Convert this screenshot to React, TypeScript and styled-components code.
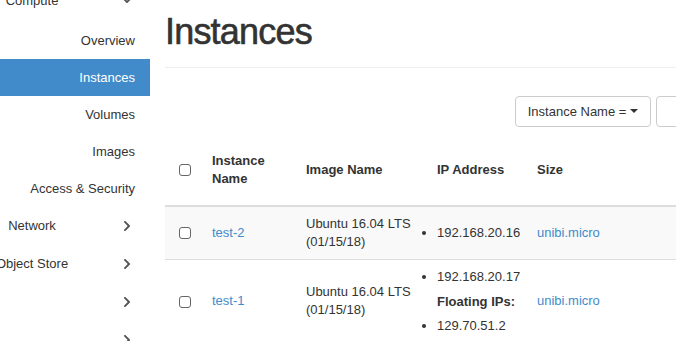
import styled, { createGlobalStyle } from "styled-components";
import { FaChevronDown, FaChevronRight } from "react-icons/fa";

interface Instance {
  id: string;
  name: string;
  image: string;
  ips: string[];
  floatingIps: string[];
  size: string;
}

const instances: Instance[] = [
  {
    id: "2",
    name: "test-2",
    image: "Ubuntu 16.04 LTS (01/15/18)",
    ips: ["192.168.20.16"],
    floatingIps: [],
    size: "unibi.micro",
  },
  {
    id: "1",
    name: "test-1",
    image: "Ubuntu 16.04 LTS (01/15/18)",
    ips: ["192.168.20.17"],
    floatingIps: ["129.70.51.2"],
    size: "unibi.micro",
  },
];

const GlobalStyle = createGlobalStyle`
  html, body {
    margin: 0;
    overflow: hidden;
    background: #fff;
    font-family: "Liberation Sans", Arial, sans-serif;
    font-size: 13px;
    color: #333;
  }
`;

const Layout = styled.div`
  display: flex;
  width: 960px;
  height: 341px;
  overflow: hidden;
`;

const Sidebar = styled.nav`
  width: 150px;
  flex-shrink: 0;
  margin-top: -19px;
`;

const GroupHeader = styled.div`
  display: flex;
  align-items: center;
  height: 38px;
  padding-right: 17px;
  color: #333;

  svg {
    color: #555;
  }
`;

const GroupLabel = styled.span`
  width: 64px;
  display: flex;
  justify-content: center;
  white-space: nowrap;
`;

const Spacer = styled.span`
  flex: 1;
`;

const SubMenu = styled.div`
  padding-top: 2.5px;
`;

const SubItem = styled.a<{ $active?: boolean }>`
  display: block;
  height: 37px;
  line-height: 37px;
  text-align: right;
  padding-right: 15px;
  text-decoration: none;
  color: ${(p) => (p.$active ? "#fff" : "#333")};
  background: ${(p) => (p.$active ? "#428bca" : "transparent")};
`;

const Main = styled.main`
  flex: 1;
  min-width: 0;
  padding: 0 15px;
`;

const PageHeader = styled.div`
  margin-top: 12px;
  padding-bottom: 15px;
  border-bottom: 1px solid #eee;
`;

const Title = styled.h1`
  margin: 0;
  font-size: 36px;
  line-height: 1.1;
  font-weight: 500;
  letter-spacing: -0.8px;
  color: #333;
  -webkit-text-stroke: 0.6px #333;
`;

const Toolbar = styled.div`
  display: flex;
  justify-content: flex-end;
  gap: 5px;
  margin-top: 28px;
`;

const DropButton = styled.button`
  height: 31px;
  padding: 0 12px;
  border: 1px solid #ccc;
  border-radius: 4px;
  background: #fff;
  color: #333;
  font: inherit;
  display: inline-flex;
  align-items: center;
  white-space: pre;
`;

const Caret = styled.span`
  width: 0;
  height: 0;
  border-left: 4px solid transparent;
  border-right: 4px solid transparent;
  border-top: 4px solid #333;
`;

const FilterInput = styled.input`
  width: 200px;
  height: 31px;
  box-sizing: border-box;
  border: 1px solid #ccc;
  border-radius: 4px;
  padding: 0 10px;
  font: inherit;
`;

const FilterButton = styled.button`
  width: 84px;
  height: 31px;
  border: 1px solid #ccc;
  border-radius: 4px;
  background: #fff;
  font: inherit;
  color: #333;
`;

const Table = styled.table`
  width: 100%;
  margin-top: 17px;
  table-layout: fixed;
  border-collapse: collapse;
`;

const HeadCell = styled.th<{ $center?: boolean }>`
  padding: 8px 8px 17px;
  text-align: ${(p) => (p.$center ? "center" : "left")};
  vertical-align: middle;
  line-height: 18px;
  font-weight: bold;
  border-bottom: 2px solid #ddd;
`;

const Row = styled.tr<{ $striped?: boolean }>`
  background: ${(p) => (p.$striped ? "#f9f9f9" : "#fff")};
`;

const Cell = styled.td<{ $center?: boolean }>`
  padding: 8px;
  line-height: 18px;
  vertical-align: middle;
  text-align: ${(p) => (p.$center ? "center" : "left")};
  border-top: 1px solid #ddd;
`;

const CheckBox = styled.input.attrs({ type: "checkbox" })`
  appearance: none;
  display: inline-block;
  width: 12px;
  height: 12px;
  margin: 0;
  border: 1px solid #666;
  border-radius: 3px;
  background: #fff;
  vertical-align: middle;
`;

const Link = styled.a`
  color: #428bca;
  text-decoration: none;
`;

const IpList = styled.ul`
  margin: 0;
  padding-left: 0;
  list-style: disc outside;
`;

const FloatingLabel = styled.strong`
  display: block;
  margin: 7px 0 6px;
`;

export default function App() {
  return (
    <>
      <GlobalStyle />
      <Layout>
        <Sidebar>
          <GroupHeader>
            <GroupLabel>Compute</GroupLabel>
            <Spacer />
            <FaChevronDown size={12} />
          </GroupHeader>
          <SubMenu>
            <SubItem>Overview</SubItem>
            <SubItem $active>Instances</SubItem>
            <SubItem>Volumes</SubItem>
            <SubItem>Images</SubItem>
            <SubItem>Access &amp; Security</SubItem>
          </SubMenu>
          {["Network", "Object Store", "", ""].map((label, i) => (
            <GroupHeader key={i}>
              <GroupLabel>{label}</GroupLabel>
              <Spacer />
              <FaChevronRight size={12} />
            </GroupHeader>
          ))}
        </Sidebar>
        <Main>
          <PageHeader>
            <Title>Instances</Title>
          </PageHeader>
          <Toolbar>
            <DropButton>
              {"Instance Name = "}
              <Caret />
            </DropButton>
            <FilterInput />
            <FilterButton>Filter</FilterButton>
          </Toolbar>
          <Table>
            <colgroup>
              <col style={{ width: 39 }} />
              <col style={{ width: 94 }} />
              <col style={{ width: 131 }} />
              <col style={{ width: 100 }} />
              <col style={{ width: 160 }} />
              <col />
            </colgroup>
            <thead>
              <tr>
                <HeadCell $center>
                  <CheckBox readOnly />
                </HeadCell>
                <HeadCell>Instance Name</HeadCell>
                <HeadCell>Image Name</HeadCell>
                <HeadCell>IP Address</HeadCell>
                <HeadCell>Size</HeadCell>
                <HeadCell>Key Pair</HeadCell>
              </tr>
            </thead>
            <tbody>
              {instances.map((inst, i) => (
                <Row key={inst.id} $striped={i % 2 === 0}>
                  <Cell $center>
                    <CheckBox readOnly />
                  </Cell>
                  <Cell>
                    <Link>{inst.name}</Link>
                  </Cell>
                  <Cell>{inst.image}</Cell>
                  <Cell>
                    <IpList>
                      {inst.ips.map((ip) => (
                        <li key={ip}>{ip}</li>
                      ))}
                    </IpList>
                    {inst.floatingIps.length > 0 && (
                      <>
                        <FloatingLabel>Floating IPs:</FloatingLabel>
                        <IpList>
                          {inst.floatingIps.map((ip) => (
                            <li key={ip}>{ip}</li>
                          ))}
                        </IpList>
                      </>
                    )}
                  </Cell>
                  <Cell>
                    <Link>{inst.size}</Link>
                  </Cell>
                  <Cell>-</Cell>
                </Row>
              ))}
            </tbody>
          </Table>
        </Main>
      </Layout>
    </>
  );
}
